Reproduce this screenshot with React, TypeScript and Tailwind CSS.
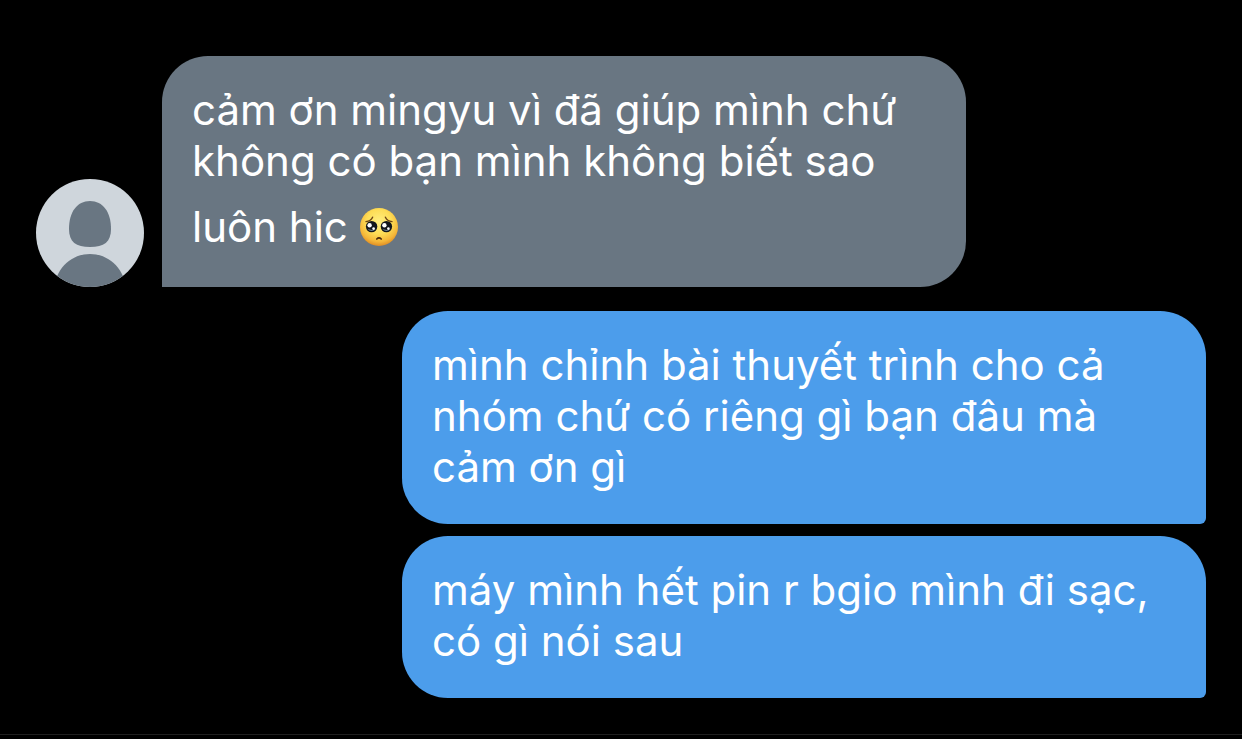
import type { ReactNode } from "react";

function Avatar() {
  return (
    <svg viewBox="0 0 108 108" role="img" aria-label="Avatar" className="size-[108px] shrink-0">
      <defs>
        <clipPath id="avatar-clip">
          <circle cx="54" cy="54" r="54" />
        </clipPath>
      </defs>
      <g clipPath="url(#avatar-clip)">
        <rect width="108" height="108" fill="#cfd6dc" />
        <path
          d="M54 22 C67 22 75 33 75 50 C75 63 68 68 54 68 C40 68 33 63 33 50 C33 33 41 22 54 22Z"
          fill="#697682"
        />
        <path d="M18 108 C21 88 36 75 54 75 C72 75 87 88 90 108Z" fill="#697682" />
      </g>
    </svg>
  );
}

function PleadingFace() {
  return (
    <svg
      viewBox="0 0 38 38"
      role="img"
      aria-label="🥺"
      className="mt-[22px] mb-[9px] inline-block size-[38px] align-[-13px]"
    >
      <defs>
        <radialGradient id="face" cx="50%" cy="36%" r="66%">
          <stop offset="0" stopColor="#ffee80" />
          <stop offset="0.5" stopColor="#fddc55" />
          <stop offset="0.8" stopColor="#f5b638" />
          <stop offset="1" stopColor="#dc8520" />
        </radialGradient>
      </defs>
      <circle cx="19" cy="19" r="19" fill="url(#face)" />
      <g fill="none" stroke="#6b4316" strokeWidth="1.4" strokeLinecap="round">
        <path d="M6 13.6 C9 13.2 11.6 11.6 12.6 9.2" />
        <path d="M32 13.6 C29 13.2 26.4 11.6 25.4 9.2" />
      </g>
      <g>
        <circle cx="11.6" cy="18.6" r="5.7" fill="#12161c" />
        <circle cx="26.4" cy="18.6" r="5.7" fill="#12161c" />
        <path
          d="M7.4 20.8 Q11.6 25.2 15.8 20.8 Q11.6 23 7.4 20.8Z M22.2 20.8 Q26.4 25.2 30.6 20.8 Q26.4 23 22.2 20.8Z"
          fill="#6f8796"
        />
        <circle cx="9.6" cy="17.2" r="2.2" fill="#fff" />
        <circle cx="24.4" cy="17.2" r="2.2" fill="#fff" />
        <circle cx="13.6" cy="20.6" r="1.3" fill="#fff" />
        <circle cx="28.4" cy="20.6" r="1.3" fill="#fff" />
      </g>
      <path d="M16.8 31 Q19 28.8 21.2 31" fill="none" stroke="#4a2a0c" strokeWidth="1.7" strokeLinecap="round" />
    </svg>
  );
}

function Received({ children }: { children: ReactNode }) {
  return (
    <li className="flex items-end gap-[18px]">
      <Avatar />
      <p className="w-full max-w-[804px] rounded-[46px] rounded-bl-none bg-[#697682] px-[30px] pt-7 pb-8">
        {children}
      </p>
    </li>
  );
}

function Sent({ children }: { children: ReactNode }) {
  return (
    <li className="flex justify-end">
      <p className="w-full max-w-[804px] rounded-[46px] rounded-br-md bg-[#4c9deb] px-[30px] pt-7 pb-8">
        {children}
      </p>
    </li>
  );
}

export default function App() {
  return (
    <main
      lang="vi"
      className="flex min-h-screen flex-col bg-black font-['Inter',sans-serif] text-[42px] leading-[51px] text-white"
    >
      <ul className="flex flex-col gap-6 px-9 pt-14 pb-9">
        <Received>
          cảm ơn mingyu vì đã giúp mình chứ không có bạn mình không biết sao luôn hic <PleadingFace />
        </Received>
        <li>
          <ul className="flex flex-col gap-3">
            <Sent>mình chỉnh bài thuyết trình cho cả nhóm chứ có riêng gì bạn đâu mà cảm ơn gì</Sent>
            <Sent>máy mình hết pin r bgio mình đi sạc, có gì nói sau</Sent>
          </ul>
        </li>
      </ul>
      <footer className="border-t border-[#202020]" />
    </main>
  );
}
